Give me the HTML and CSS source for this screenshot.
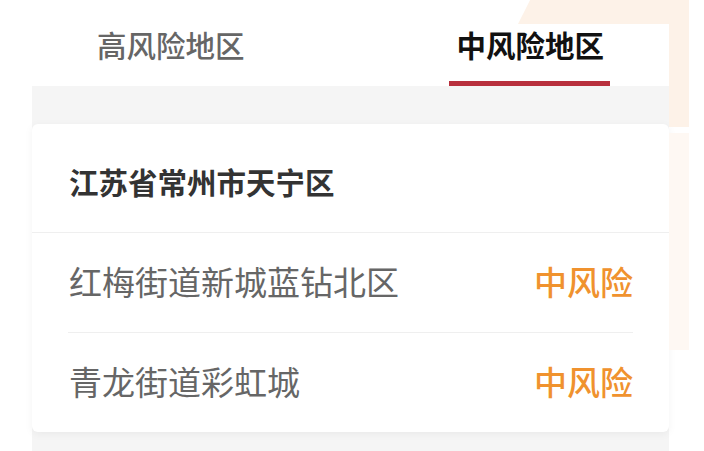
FILE: index.html
```html
<!DOCTYPE html>
<html lang="zh-CN">
<head>
<meta charset="utf-8">
<title>风险地区</title>
<link rel="stylesheet" href="styles.css">
</head>
<body>
<div class="page">
  <div class="main">
    <div class="deco-top"><div class="peak"></div></div>
    <div class="tabs">
      <div class="tab">高风险地区</div>
      <div class="tab active">中风险地区</div>
    </div>
    <div class="content">
      <div class="card">
        <div class="card-head">江苏省常州市天宁区</div>
        <div class="row">
          <span class="name">红梅街道新城蓝钻北区</span>
          <span class="level">中风险</span>
        </div>
        <div class="row last">
          <span class="name">青龙街道彩虹城</span>
          <span class="level">中风险</span>
        </div>
      </div>
    </div>
  </div>
  <div class="side">
    <div class="peach1"></div>
    <div class="peach2"></div>
  </div>
</div>
</body>
</html>
```
FILE: styles.css
```css
html, body {
  margin: 0;
  padding: 0;
  background: #ffffff;
  font-family: "Noto Sans CJK SC", "Noto Sans", sans-serif;
}
.page {
  display: flex;
  align-items: flex-start;
  width: 704px;
  height: 451px;
  overflow: hidden;
}
.main {
  width: 669px;
  flex: none;
}
.deco-top {
  height: 24px;
  display: flex;
  justify-content: flex-end;
}
.peak {
  width: 151px;
  height: 24px;
  background: #fdf2e8;
  clip-path: polygon(8% 0, 100% 0, 100% 100%, 0 100%);
}
.tabs {
  height: 62px;
  display: flex;
  padding-left: 97px;
  background: #ffffff;
  box-sizing: border-box;
}
.tab {
  height: 62px;
  line-height: 40px;
  font-size: 29.5px;
  font-weight: 500;
  color: #666666;
  box-sizing: border-box;
  white-space: nowrap;
}
.tab.active {
  margin-left: 204px;
  padding: 0 8px;
  width: 161px;
  text-align: center;
  color: #111111;
  font-weight: 700;
  border-bottom: 5px solid #b8303d;
}
.content {
  margin-left: 32px;
  background: #f5f5f5;
  padding: 38px 0 19px;
}
.card {
  background: #ffffff;
  border-radius: 6px;
  box-shadow: 0 2px 8px rgba(0, 0, 0, 0.05);
}
.card-head {
  height: 109px;
  box-sizing: border-box;
  padding: 37px 37px 0;
  line-height: 40px;
  font-size: 29.5px;
  font-weight: 700;
  color: #333333;
  border-bottom: 1px solid #efefef;
}
.row {
  height: 100px;
  margin: 0 36px;
  padding-bottom: 4px;
  box-sizing: border-box;
  display: flex;
  align-items: center;
  justify-content: space-between;
  border-bottom: 1px solid #efefef;
  font-size: 33px;
}
.row.last {
  height: 99px;
  border-bottom: none;
}
.name {
  color: #666666;
  padding-left: 1px;
}
.level {
  color: #f0922e;
  font-weight: 500;
}
.side {
  width: 20px;
  flex: none;
  display: flex;
  flex-direction: column;
  gap: 6px;
}
.peach1 {
  height: 127px;
  background: #fdf2e8;
}
.peach2 {
  height: 217px;
  background: #fef8f3;
}
```
